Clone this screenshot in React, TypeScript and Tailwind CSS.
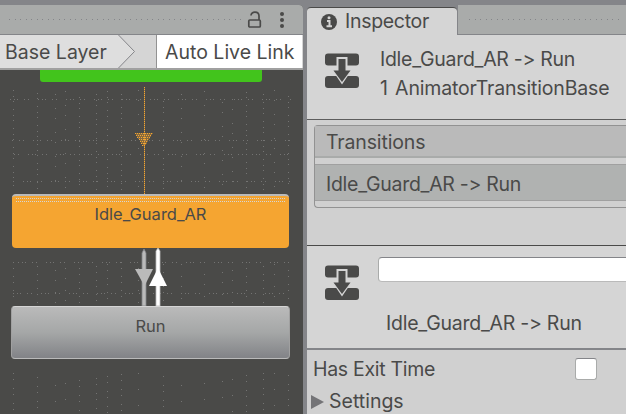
import React from "react";

const VERTICALS = [13, 37, 55, 65, 79, 96, 107, 121, 138, 163, 181, 204, 222, 232, 246, 263, 274, 288];
const SPARSE = [55, 65, 138, 181, 204, 222, 232, 274];
const HORIZONTALS = [99, 140, 154, 181, 262, 293];

function GraphGrid() {
  return (
    <svg className="absolute inset-0" width="303" height="344" viewBox="0 70 303 344" shapeRendering="crispEdges">
      {VERTICALS.map((x, i) => (
        <g key={x} stroke="#747473" strokeWidth="1">
          <path d={`M${x + 0.5} 90V190`} strokeDasharray={SPARSE.includes(x) ? "1 9 1 13" : "1 5 1 4 1 7"} strokeDashoffset={i * 3} />
          <path d={`M${x + 0.5} 262V303`} strokeDasharray={SPARSE.includes(x) ? "1 11 1 9" : "1 5 1 7"} strokeDashoffset={i * 2} />
          <path d={`M${x + 0.5} 373V413`} strokeDasharray={SPARSE.includes(x) ? "1 15" : "1 5 1 8"} strokeDashoffset={i * 2} />
        </g>
      ))}
      {HORIZONTALS.map((y, i) => (
        <path key={y} d={`M10 ${y + 0.5}H291`} stroke="#747473" strokeWidth="1" strokeDasharray="1 3 1 2 1 6 1 3 1 9" strokeDashoffset={i * 5} />
      ))}
      <path d="M144.5 87V194" stroke="#f5a531" strokeOpacity=".35" />
      <path d="M144.5 87V194" stroke="#f5a531" strokeWidth="1" strokeDasharray="1 1" />
      <path d="M135 133H153L144.500 147Z" fill="#f5a531" fillOpacity=".35" />
      {[0, 1, 2, 3, 4, 5, 6].map((r) => (
        <path key={r} d={`M${135 + Math.round(r * 1.2)} ${133.5 + r * 2}H${153 - Math.round(r * 1.2)}`} stroke="#f5a531" strokeDasharray="1 1" />
      ))}
    </svg>
  );
}

function Arrows() {
  return (
    <svg className="absolute left-[130px] top-[178px]" width="44" height="60" viewBox="130 248 44 60">
      <path d="M142 253L144 249L146 253V306H142Z" fill="#bababa" stroke="#848589" strokeWidth=".8" />
      <path d="M135 269H153L144.500 286Z" fill="#bababa" />
      <path d="M156 251L158 248L160 251V306H156Z" fill="#fff" stroke="#bababa" strokeWidth=".8" />
      <path d="M149 286H167L158 268Z" fill="#fff" />
    </svg>
  );
}

function TransitionIcon() {
  return (
    <svg width="34" height="36" viewBox="0 0 34 36">
      <rect y="0.500" width="34" height="12" rx="3" fill="#4a4a49" />
      <rect y="23" width="34" height="12" rx="3" fill="#4a4a49" />
      <path d="M11.500 4H22.500V16H27.500L17 31.500L6.500 16H11.500Z" fill="#d5d5d5" />
      <path d="M13.500 6H20.500V17.500H25.500L17 29L8.500 17.500H13.500Z" fill="#4a4a49" />
    </svg>
  );
}

function DottedGrip({ className }: { className: string }) {
  return (
    <svg className={className} height="2">
      <path d="M0 .5H400" stroke="#848589" strokeDasharray="1 5 1 4" shapeRendering="crispEdges" />
    </svg>
  );
}

function AnimatorPanel() {
  return (
    <section className="flex h-[409px] w-[303px] shrink-0 flex-col overflow-hidden rounded-tr bg-[#4a4a48]">
      <header className="flex h-[29px] shrink-0 items-center bg-[#a9abaa]">
        <DottedGrip className="ml-[9px] w-[233px]" />
        <svg className="ml-[5px] mt-[1px]" width="16" height="18" viewBox="0 0 16 18" fill="none" stroke="#4a4a49" strokeWidth="1.700">
          <rect x="1.800" y="9" width="11.500" height="7" rx="1" />
          <path d="M4 4.500C4 0 12 0 12 5V9" />
        </svg>
        <svg className="ml-[16px]" width="6" height="18" viewBox="0 0 6 18" fill="#4a4a49">
          <circle cx="3" cy="3" r="2" />
          <circle cx="3" cy="9" r="2" />
          <circle cx="3" cy="15" r="2" />
        </svg>
      </header>
      <div className="flex h-[36px] shrink-0 border-b-2 border-t border-b-[#a0a0a0] border-t-[#848589] bg-[#d5d5d5]">
        <div className="relative flex h-full w-[157px] items-center border-r border-[#929292]">
          <svg className="absolute inset-0" width="156" height="33">
            <path d="M0 0H118.500L134.500 16.500L118.500 33H0Z" fill="#dedede" />
            <path d="M118.500 0L134.500 16.500L118.500 33" fill="none" stroke="#848589" />
          </svg>
          <span className="relative ml-[5px] mt-[2px] whitespace-nowrap text-[19.5px]">Base Layer</span>
        </div>
        <div className="flex w-[145px] items-center bg-white pl-[8px]">
          <span className="mt-[2px] whitespace-nowrap text-[19.5px]">Auto Live Link</span>
        </div>
      </div>
      <div className="relative h-[344px] w-[303px] overflow-hidden bg-[#4a4a48]">
        <GraphGrid />
        <div className="absolute left-[40px] top-[-8px] h-[20px] w-[222px] rounded-[3px] bg-[#42c41c]" />
        <Arrows />
        <div className="absolute left-[12px] top-[124px] h-[54px] w-[277px] rounded border-t-2 border-[#bababa] bg-[#f5a531] text-center text-[16.5px] leading-[37px]">
          <div className="absolute inset-x-1 top-[2px] border-t border-dotted border-[#d5d5d5]" />
          <div className="absolute inset-x-1 top-[5px] border-t border-dotted border-[#d5d5d5]" />
          Idle_Guard_AR
        </div>
        <div className="absolute left-[11px] top-[236px] h-[53px] w-[279px] rounded border border-b-[#bababa] border-l-[#a0a0a0] border-r-[#a0a0a0] border-t-[#d5d5d5] bg-linear-to-b from-[#bababa] via-[#a5a7a7] to-[#828387] text-center text-[16.5px] leading-[38px]">
          Run
        </div>
      </div>
    </section>
  );
}

function InspectorPanel() {
  return (
    <section className="flex h-[409px] w-[319px] flex-col">
      <header className="flex h-[30px] shrink-0">
        <div className="mt-[2px] flex h-[28px] w-[150px] items-center rounded-t border-t border-t-[#4a4a49] bg-[#d5d5d5] pl-[14px]">
          <svg width="16" height="16" viewBox="0 0 16 16">
            <circle cx="8" cy="8" r="8" fill="#4a4a49" />
            <path d="M6 7H8.500V12M5.500 12.300H11" fill="none" stroke="#d5d5d5" strokeWidth="2" />
            <circle cx="8" cy="3.800" r="1.500" fill="#d5d5d5" />
          </svg>
          <span className="ml-[8px] mt-px text-[19.5px] tracking-[-0.3px]">Inspector</span>
        </div>
        <div className="flex flex-1 items-center border-b border-l border-[#848589] bg-[#a9abaa]">
          <DottedGrip className="ml-[11px] w-[152px]" />
        </div>
      </header>
      <div className="flex h-[85px] shrink-0 border-b border-[#5d5d5d] bg-[#d5d5d5] pl-[18px] pt-[18px]">
        <TransitionIcon />
        <div className="-mt-[8px] ml-[21px] whitespace-nowrap text-[19.5px] leading-[29px]">
          <div className="tracking-[-0.28px]">Idle_Guard_AR -&gt; Run</div>
          <div className="tracking-[-0.16px] [word-spacing:2px]">1 AnimatorTransitionBase</div>
        </div>
      </div>
      <div className="h-[126px] shrink-0 border-b border-[#4a4a49] bg-[#d0d0d0] pl-[7px] pt-[5px]">
        <div className="h-[83px] rounded-l border border-r-0 border-[#929292] bg-[#d0d0d0]">
          <div className="flex h-[32px] items-center border-b-2 border-[#a9abaa] bg-[#bababa] pl-[11px] pt-[4px] text-[19.5px] tracking-[-0.15px]">Transitions</div>
          <div className="mt-[6px] flex h-[37px] items-center border-b border-t border-[#a0a0a0] bg-[#b0b2b1] pl-[11px] pt-[4px] text-[19.5px] tracking-[-0.28px]">
            Idle_Guard_AR -&gt; Run
          </div>
        </div>
      </div>
      <div className="flex h-[104px] shrink-0 border-b-2 border-[#848589] bg-[#d5d5d5] pl-[18px]">
        <div className="pt-[19px]">
          <TransitionIcon />
        </div>
        <div className="ml-[19px] flex-1 pt-[11px]">
          <div className="h-[25px] rounded-l border border-r-0 border-b-[#bababa] border-l-[#a9abaa] border-t-[#848589] bg-white" />
          <div className="ml-[8px] mt-[26px] whitespace-nowrap text-[19.5px] leading-[30px] tracking-[-0.25px]">Idle_Guard_AR -&gt; Run</div>
        </div>
      </div>
      <div className="flex-1 bg-[#d0d0d0] pl-[6px] text-[19.5px]">
        <div className="flex h-[38px] items-center">
          <span className="mt-[2px] whitespace-nowrap tracking-[-0.3px]">Has Exit Time</span>
          <span className="ml-auto mr-[29px] h-[22px] w-[22px] rounded-[3px] border border-[#a9abaa] border-t-[#848589] bg-white" />
        </div>
        <div className="-mt-[2px] flex h-[30px] items-center">
          <svg className="-ml-[2px] mt-px" width="13" height="14">
            <path d="M0 0L13 7L0 14Z" fill="#747477" />
          </svg>
          <span className="ml-[5px] mt-[2px]">Settings</span>
        </div>
      </div>
    </section>
  );
}

export default function App() {
  return (
    <main className="flex h-[414px] w-[626px] overflow-hidden bg-[#848589] pt-[5px] font-['Inter',sans-serif] text-[#4a4a49] [font-feature-settings:'calt'_0]">
      <AnimatorPanel />
      <div className="w-[4px] shrink-0" />
      <InspectorPanel />
    </main>
  );
}
